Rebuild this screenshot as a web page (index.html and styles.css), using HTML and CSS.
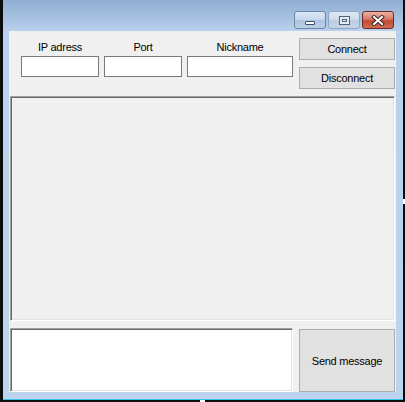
FILE: index.html
```html
<!DOCTYPE html>
<html>
<head>
<meta charset="utf-8">
<link rel="stylesheet" href="styles.css">
</head>
<body>
<div class="screen">
  <div class="window">
    <div class="titlebar">
      <div class="cbtn min"><span class="min-glyph"></span></div>
      <div class="cbtn max"><span class="max-glyph"></span></div>
      <div class="cbtn close">
        <svg width="14" height="11" viewBox="0 0 14 11">
          <path d="M3 2 L11 9 M11 2 L3 9" stroke="#3a2624" stroke-width="4" stroke-linecap="square" fill="none"/>
          <path d="M3 2 L11 9 M11 2 L3 9" stroke="#ffffff" stroke-width="2" stroke-linecap="square" fill="none"/>
        </svg>
      </div>
    </div>
    <div class="client">
      <div class="top">
        <div class="field">
          <span class="label">IP adress</span>
          <div class="tb tb-ip"></div>
        </div>
        <div class="field">
          <span class="label">Port</span>
          <div class="tb tb-port"></div>
        </div>
        <div class="field field-last">
          <span class="label">Nickname</span>
          <div class="tb tb-nick"></div>
        </div>
        <div class="btn-col">
          <button class="btn">Connect</button>
          <button class="btn">Disconnect</button>
        </div>
      </div>
      <div class="listbox"></div>
      <div class="bottom">
        <div class="msgbox"></div>
        <button class="btn send">Send message</button>
      </div>
    </div>
  </div>
  <div class="notch notch-r"></div>
  <div class="notch notch-b"></div>
</div>
</body>
</html>
```

FILE: styles.css
```css
html, body {
  margin: 0;
  padding: 0;
}
body {
  width: 405px;
  height: 402px;
  overflow: hidden;
  background: #0d0d0d;
}
.screen {
  position: relative;
  width: 405px;
  height: 402px;
  background: #0d0d0d;
}
.window {
  margin-left: 3px;
  width: 400px;
  height: 400px;
  box-sizing: border-box;
  padding: 0 7px 7px 6px;
  border-bottom: 1px solid #38c4e8;
  background: linear-gradient(#90aed2 0px, #a9c3e2 20px, #b9d1ec 31px, #bdd4ee 100%);
  display: flex;
  flex-direction: column;
}
.titlebar {
  height: 31px;
  box-sizing: border-box;
  padding: 11px 2px 0 0;
  display: flex;
  justify-content: flex-end;
  align-items: flex-start;
  gap: 2px;
}
.cbtn {
  width: 32px;
  height: 18px;
  box-sizing: border-box;
  border: 1px solid #6b86aa;
  border-radius: 3px;
  background: linear-gradient(#dae6f4 0%, #c6d7ec 48%, #aec4df 52%, #bccfe7 100%);
  display: flex;
  align-items: center;
  justify-content: center;
}
.max {
  border-color: #8ea3bf;
  background: linear-gradient(#dfe8f3 0%, #cddbeb 48%, #bccde2 52%, #c6d5e8 100%);
}
.close {
  border-color: #6e2a22;
  background: linear-gradient(#eab2a4 0%, #d77a66 45%, #c54a31 55%, #d16b51 100%);
}
.min-glyph {
  width: 10px;
  height: 4px;
  box-sizing: border-box;
  margin-top: 5px;
  background: #fff;
  border: 1px solid #3d4d66;
  border-radius: 1px;
}
.max-glyph {
  width: 11px;
  height: 9px;
  box-sizing: border-box;
  border: 1px solid #56627a;
  background: #e6ecf4;
  box-shadow: inset 0 0 0 2px #e6ecf4, inset 0 0 0 3px #56627a;
}
.client {
  flex: 1;
  background: #f0f0f0;
  display: flex;
  flex-direction: column;
  padding-left: 1px;
  font-family: "Liberation Sans", Arial, sans-serif;
  font-size: 11px;
  letter-spacing: -0.25px;
  color: #000;
}
.top {
  height: 65px;
  display: flex;
  padding-left: 11px;
}
.field {
  display: flex;
  flex-direction: column;
  align-items: center;
  padding-top: 9px;
  margin-right: 5px;
}
.field-last {
  margin-right: 6px;
}
.label {
  line-height: 14px;
  margin-bottom: 2px;
}
.tb {
  height: 21px;
  box-sizing: border-box;
  border: 1px solid #7a7a7a;
  background: #fff;
}
.tb-ip, .tb-port {
  width: 78px;
}
.tb-nick {
  width: 106px;
}
.btn-col {
  display: flex;
  flex-direction: column;
  gap: 7px;
  padding-top: 7px;
}
.btn {
  width: 96px;
  height: 22px;
  box-sizing: border-box;
  border: 1px solid #adadad;
  background: #e1e1e1;
  font: inherit;
  letter-spacing: inherit;
  color: #000;
  padding: 0;
  margin: 0;
}
.listbox {
  width: 385px;
  height: 225px;
  box-sizing: border-box;
  border: 1px solid;
  border-color: #a0a0a0 #ffffff #ffffff #a0a0a0;
  box-shadow: inset 1px 1px 0 #696969, inset -1px -1px 0 #e3e3e3;
  background: #f0f0f0;
}
.bottom {
  display: flex;
  align-items: flex-start;
  gap: 6px;
  margin-top: 7px;
}
.msgbox {
  width: 283px;
  height: 64px;
  box-sizing: border-box;
  border: 1px solid;
  border-color: #a0a0a0 #ffffff #ffffff #a0a0a0;
  box-shadow: inset 1px 1px 0 #696969, inset -1px -1px 0 #e3e3e3;
  background: #fff;
}
.send {
  height: 63px;
  margin-top: 1px;
}
.notch {
  position: absolute;
  background: #fff;
}
.notch-r {
  left: 403px;
  top: 199px;
  width: 2px;
  height: 5px;
}
.notch-b {
  left: 200px;
  top: 400px;
  width: 5px;
  height: 2px;
}
```
